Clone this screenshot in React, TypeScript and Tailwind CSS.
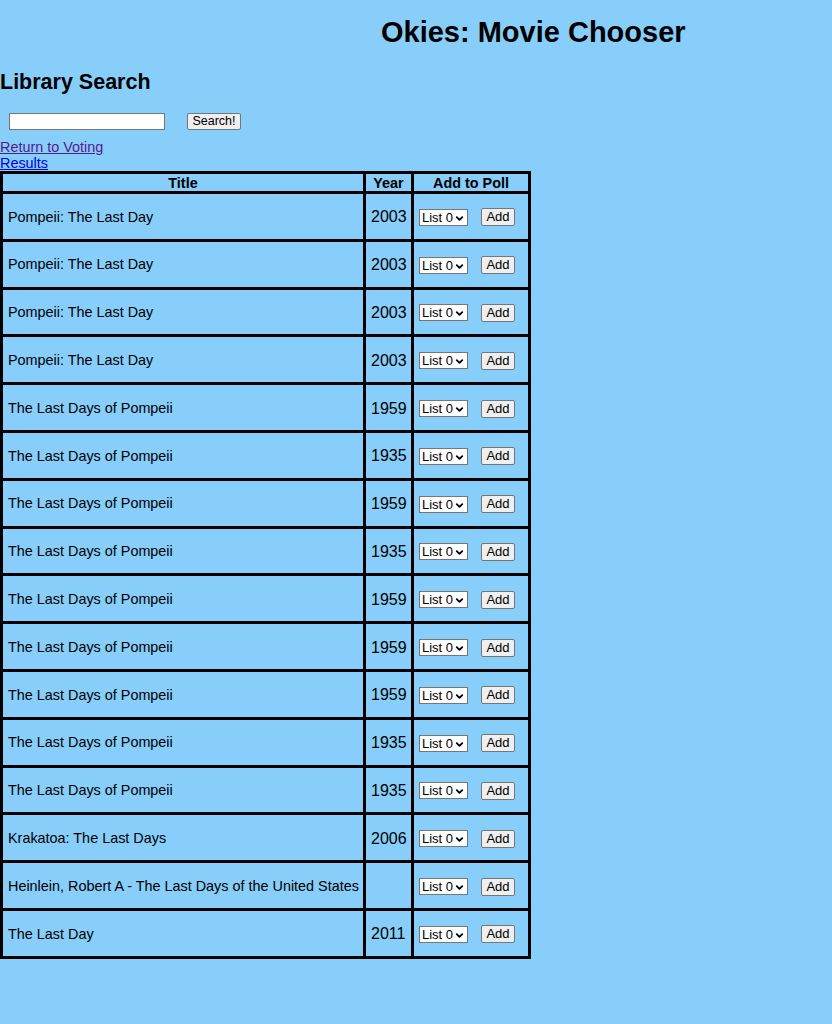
import { ChevronDown } from 'lucide-react';

const movies = [
  { title: 'Pompeii: The Last Day', year: '2003' },
  { title: 'Pompeii: The Last Day', year: '2003' },
  { title: 'Pompeii: The Last Day', year: '2003' },
  { title: 'Pompeii: The Last Day', year: '2003' },
  { title: 'The Last Days of Pompeii', year: '1959' },
  { title: 'The Last Days of Pompeii', year: '1935' },
  { title: 'The Last Days of Pompeii', year: '1959' },
  { title: 'The Last Days of Pompeii', year: '1935' },
  { title: 'The Last Days of Pompeii', year: '1959' },
  { title: 'The Last Days of Pompeii', year: '1959' },
  { title: 'The Last Days of Pompeii', year: '1959' },
  { title: 'The Last Days of Pompeii', year: '1935' },
  { title: 'The Last Days of Pompeii', year: '1935' },
  { title: 'Krakatoa: The Last Days', year: '2006' },
  { title: 'Heinlein, Robert A - The Last Days of the United States', year: '' },
  { title: 'The Last Day', year: '2011' },
];

function ListSelect() {
  return (
    <span className="relative inline-flex items-center w-[49px] h-[17px] bg-white border border-[#767676] text-[13px] leading-[15px] pl-[2px]">
      <span>List 0</span>
      <ChevronDown className="absolute right-[2px] top-[3px] w-[11px] h-[11px]" strokeWidth={4} />
    </span>
  );
}

export default function App() {
  return (
    <div className="min-h-screen bg-[#87cefa] text-black font-['Liberation_Sans',Arial,sans-serif]">
      <h1 className="pt-[16px] pl-[381px] text-[29px] leading-[33px] font-bold">Okies: Movie Chooser</h1>
      <h2 className="mt-[20.5px] text-[21.5px] leading-[25px] font-bold">Library Search</h2>

      <div className="mt-[18.5px] flex items-center h-[17px]">
        <input
          type="text"
          className="ml-[9px] w-[156px] h-[17px] bg-white border border-[#767676] text-[12px] px-[2px] outline-none"
        />
        <button className="ml-[22px] w-[54px] h-[17px] bg-[#efefef] border border-[#767676] rounded-[2px] text-[12.5px] leading-[15px]">
          Search!
        </button>
      </div>

      <div className="mt-[9px] text-[14.4px] leading-[16px]">
        <a href="#voting" className="block w-fit underline text-[#551a8b]">Return to Voting</a>
        <a href="#results" className="block w-fit underline text-[#0000ee]">Results</a>
      </div>

      <table className="table-fixed border-collapse w-[531px] text-[14.4px]">
        <colgroup>
          <col className="w-[363px]" />
          <col className="w-[48px]" />
          <col className="w-[117px]" />
        </colgroup>
        <thead>
          <tr>
            <th className="border-[3px] border-black h-[20px] p-0 leading-[16px] font-bold text-center">Title</th>
            <th className="border-[3px] border-black h-[20px] p-0 leading-[16px] font-bold text-center">Year</th>
            <th className="border-[3px] border-black h-[20px] p-0 leading-[16px] font-bold text-center">Add to Poll</th>
          </tr>
        </thead>
        <tbody>
          {movies.map((m, i) => (
            <tr key={i}>
              <td className="border-[3px] border-black h-[47.8px] pt-[2px] pb-0 pl-[5px] pr-0 whitespace-nowrap">{m.title}</td>
              <td className="border-[3px] border-black h-[47.8px] pt-[2px] pb-0 pl-[5px] pr-0 text-[16px]">{m.year}</td>
              <td className="border-[3px] border-black h-[47.8px] pt-[2px] pb-0 pl-[5px] pr-0">
                <div className="flex items-center">
                  <ListSelect />
                  <button className="ml-[13px] w-[34px] h-[18px] bg-[#efefef] border border-[#767676] rounded-[2px] text-[13px] leading-[16px]">
                    Add
                  </button>
                </div>
              </td>
            </tr>
          ))}
        </tbody>
      </table>
    </div>
  );
}
